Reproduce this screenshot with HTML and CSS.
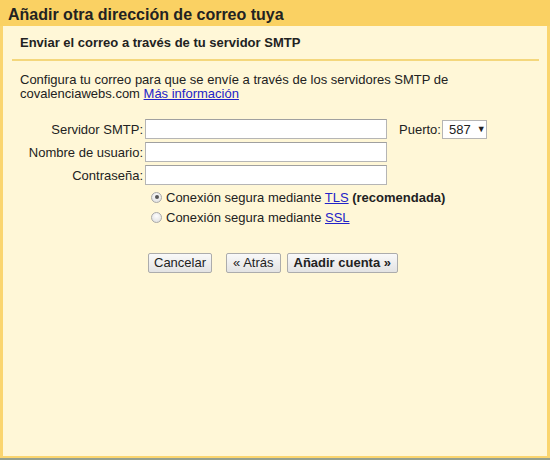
FILE: index.html
```html
<!DOCTYPE html>
<html lang="es">
<head>
<meta charset="utf-8">
<title>Añadir otra dirección de correo tuya</title>
<link rel="stylesheet" href="styles.css">
</head>
<body>
<div class="dialog">
  <div class="title">Añadir otra dirección de correo tuya</div>
  <div class="content">
    <div class="subtitle">Enviar el correo a través de tu servidor SMTP</div>
    <div class="sep"></div>
    <p class="desc">Configura tu correo para que se envíe a través de los servidores SMTP de<br>covalenciawebs.com <a href="#">Más información</a></p>
    <div class="form">
      <div class="row">
        <label class="lbl">Servidor SMTP:</label>
        <span class="input"></span>
        <span class="port-lbl">Puerto:</span>
        <span class="select">587<span class="arrow">▼</span></span>
      </div>
      <div class="row">
        <label class="lbl">Nombre de usuario:</label>
        <span class="input"></span>
      </div>
      <div class="row">
        <label class="lbl">Contraseña:</label>
        <span class="input"></span>
      </div>
      <div class="radios">
        <div class="radio-row"><span class="radio checked"></span><span>Conexión segura mediante <a href="#">TLS</a> <b>(recomendada)</b></span></div>
        <div class="radio-row"><span class="radio"></span><span>Conexión segura mediante <a href="#">SSL</a></span></div>
      </div>
      <div class="buttons">
        <span class="btn btn-cancel">Cancelar</span>
        <span class="btn btn-back">« Atrás</span>
        <span class="btn btn-add">Añadir cuenta »</span>
      </div>
    </div>
  </div>
</div>
</body>
</html>
```
FILE: styles.css
```css
html, body {
  margin: 0;
  padding: 0;
  background: #95a08f;
}
body {
  font-family: "Liberation Sans", Arial, sans-serif;
  font-size: 13px;
  color: #222;
}
.dialog {
  width: 550px;
  height: 458px;
  display: flex;
  flex-direction: column;
}
.title {
  height: 23px;
  padding: 3px 0 0 8px;
  line-height: 23px;
  font-size: 16px;
  font-weight: bold;
  background: #fad163;
  color: #222;
}
.content {
  flex: 1;
  background: #fff7d7;
  border-left: 3px solid #fad56f;
  border-right: 3px solid #fad56f;
  border-bottom: 2px solid #fad56f;
}
.subtitle {
  padding: 9px 0 0 17px;
  line-height: 15px;
  font-weight: bold;
}
.sep {
  height: 2px;
  margin: 9px 8px 0 9px;
  background: #f4d77c;
}
.desc {
  margin: 12px 0 0 17px;
  line-height: 14px;
}
a {
  color: #2323c8;
  text-decoration: underline;
}
.form {
  margin-top: 18px;
}
.row {
  display: flex;
  align-items: center;
  height: 20px;
  margin-bottom: 3px;
}
.lbl {
  width: 140px;
  text-align: right;
  margin-right: 2px;
}
.input {
  width: 240px;
  height: 18px;
  background: #fff;
  border: 1px solid #b5b5b5;
  border-top-color: #a0a0a0;
}
.port-lbl {
  margin-left: 12px;
}
.select {
  margin-left: 1px;
  width: 37px;
  height: 17px;
  padding-left: 6px;
  background: #fff;
  border: 1px solid #b5b5b5;
  display: flex;
  align-items: center;
  line-height: 17px;
}
.arrow {
  font-size: 9px;
  margin-left: 6px;
}
.radios {
  margin: -1px 0 0 148px;
}
.radio-row {
  display: flex;
  align-items: center;
  height: 20px;
}
.radio {
  width: 9px;
  height: 9px;
  border-radius: 50%;
  border: 1px solid #a9a9a9;
  background: radial-gradient(circle at 50% 35%, #fdfdfd, #dcdcdc);
  margin: 0 4px 0 0;
  position: relative;
  box-sizing: content-box;
}
.radio.checked::after {
  content: "";
  position: absolute;
  left: 2.5px;
  top: 2.5px;
  width: 4px;
  height: 4px;
  border-radius: 50%;
  background: #555;
}
.buttons {
  display: flex;
  margin: 26px 0 0 145px;
}
.btn {
  height: 18px;
  line-height: 18px;
  padding: 0 6px;
  border: 1px solid #acacac;
  border-radius: 2px;
  background: linear-gradient(#f9f9f9, #e3e3e3);
  color: #222;
}
.btn-cancel {
  padding: 0 5px;
}
.btn-back {
  margin-left: 14px;
}
.btn-add {
  margin-left: 6px;
  font-weight: bold;
}
```
